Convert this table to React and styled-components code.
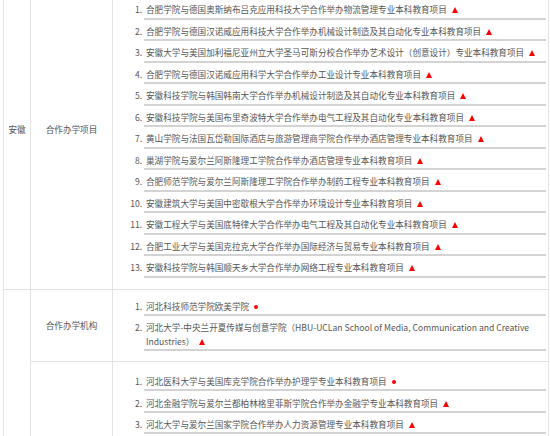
import styled, { createGlobalStyle } from 'styled-components'

const GlobalStyle = createGlobalStyle`
  html, body {
    margin: 0;
    padding: 0;
    background: #fff;
  }
  body {
    font-family: "Noto Sans CJK SC", "Microsoft YaHei", sans-serif;
  }
`

const anhuiProjects = [
    { text: '合肥学院与德国奥斯纳布吕克应用科技大学合作举办物流管理专业本科教育项目', mark: 'tri' },
    { text: '合肥学院与德国汉诺威应用科技大学合作举办机械设计制造及其自动化专业本科教育项目', mark: 'tri' },
    { text: '安徽大学与美国加利福尼亚州立大学圣马可斯分校合作举办艺术设计（创意设计）专业本科教育项目', mark: 'tri' },
    { text: '合肥学院与德国汉诺威应用科学大学合作举办工业设计专业本科教育项目', mark: 'tri' },
    { text: '安徽科技学院与韩国韩南大学合作举办机械设计制造及其自动化专业本科教育项目', mark: 'tri' },
    { text: '安徽科技学院与美国布里奇波特大学合作举办电气工程及其自动化专业本科教育项目', mark: 'tri' },
    { text: '黄山学院与法国瓦岱勒国际酒店与旅游管理商学院合作举办酒店管理专业本科教育项目', mark: 'tri' },
    { text: '巢湖学院与爱尔兰阿斯隆理工学院合作举办酒店管理专业本科教育项目', mark: 'tri' },
    { text: '合肥师范学院与爱尔兰阿斯隆理工学院合作举办制药工程专业本科教育项目', mark: 'tri' },
    { text: '安徽建筑大学与美国中密歇根大学合作举办环境设计专业本科教育项目', mark: 'tri' },
    { text: '安徽工程大学与美国底特律大学合作举办电气工程及其自动化专业本科教育项目', mark: 'tri' },
    { text: '合肥工业大学与美国克拉克大学合作举办国际经济与贸易专业本科教育项目', mark: 'tri' },
    { text: '安徽科技学院与韩国顺天乡大学合作举办网络工程专业本科教育项目', mark: 'tri' },
]

const hebeiInstitutes = [
    { text: '河北科技师范学院欧美学院', mark: 'dot' },
    { text: '河北大学-中央兰开夏传媒与创意学院（HBU-UCLan School of Media, Communication and Creative Industries）', mark: 'tri' },
]

const hebeiProjects = [
    { text: '河北医科大学与美国库克学院合作举办护理学专业本科教育项目', mark: 'dot' },
    { text: '河北金融学院与爱尔兰都柏林格里菲斯学院合作举办金融学专业本科教育项目', mark: 'tri' },
    { text: '河北大学与爱尔兰国家学院合作举办人力资源管理专业本科教育项目', mark: 'tri' },
]

const ItemList = ({ items }) => (
    <List>
        {items.map((item, i) => (
            <Item key={i}>
                {item.text}
                <Mark $kind={item.mark} />
            </Item>
        ))}
    </List>
)

const App = () => {
    return (
        <Page>
            <GlobalStyle />
            <Table>
                <colgroup>
                    <col style={{ width: 27 }} />
                    <col style={{ width: 82 }} />
                    <col style={{ width: 436 }} />
                </colgroup>
                <tbody>
                    <tr>
                        <LabelCell>安徽</LabelCell>
                        <LabelCell>合作办学项目</LabelCell>
                        <ListCell $top={27} $bottom={11}>
                            <ItemList items={anhuiProjects} />
                        </ListCell>
                    </tr>
                    <tr>
                        <LabelCell rowSpan={2} />
                        <LabelCell>合作办学机构</LabelCell>
                        <ListCell $top={5} $bottom={10}>
                            <ItemList items={hebeiInstitutes} />
                        </ListCell>
                    </tr>
                    <tr>
                        <LabelCell />
                        <ListCell $top={8} $bottom={11}>
                            <ItemList items={hebeiProjects} />
                        </ListCell>
                    </tr>
                </tbody>
            </Table>
        </Page>
    )
}

const Page = styled.div`
    width: 550px;
    height: 436px;
    overflow: hidden;
    padding-left: 3px;
    box-sizing: border-box;
`

const Table = styled.table`
    margin-top: -30px;
    width: 545px;
    border-collapse: collapse;
    table-layout: fixed;
    font-size: 8.6px;
    color: #575757;
`

const LabelCell = styled.td`
    border: 1px solid #e3e3e3;
    padding: 0;
    text-align: center;
    vertical-align: middle;
    line-height: 13px;
`

const ListCell = styled.td`
    border: 1px solid #e3e3e3;
    padding: ${p => p.$top}px 2px ${p => p.$bottom}px 0;
    vertical-align: top;
`

const List = styled.ol`
    margin: 0;
    padding-left: 31px;
    list-style: decimal outside;
`

const Item = styled.li`
    padding: 5.3px 0 1px 2px;
    line-height: 13.2px;
    border-bottom: 2px solid #d3d3d3;
`

const Mark = styled.span`
    display: inline-block;
    margin-left: 5px;
    ${p => p.$kind === 'dot' ? `
        width: 4px;
        height: 4px;
        border-radius: 50%;
        background: #f00;
        vertical-align: 1px;
    ` : `
        width: 0;
        height: 0;
        border-left: 3.5px solid transparent;
        border-right: 3.5px solid transparent;
        border-bottom: 6.5px solid #f00;
        vertical-align: 0;
    `}
`

export default App
